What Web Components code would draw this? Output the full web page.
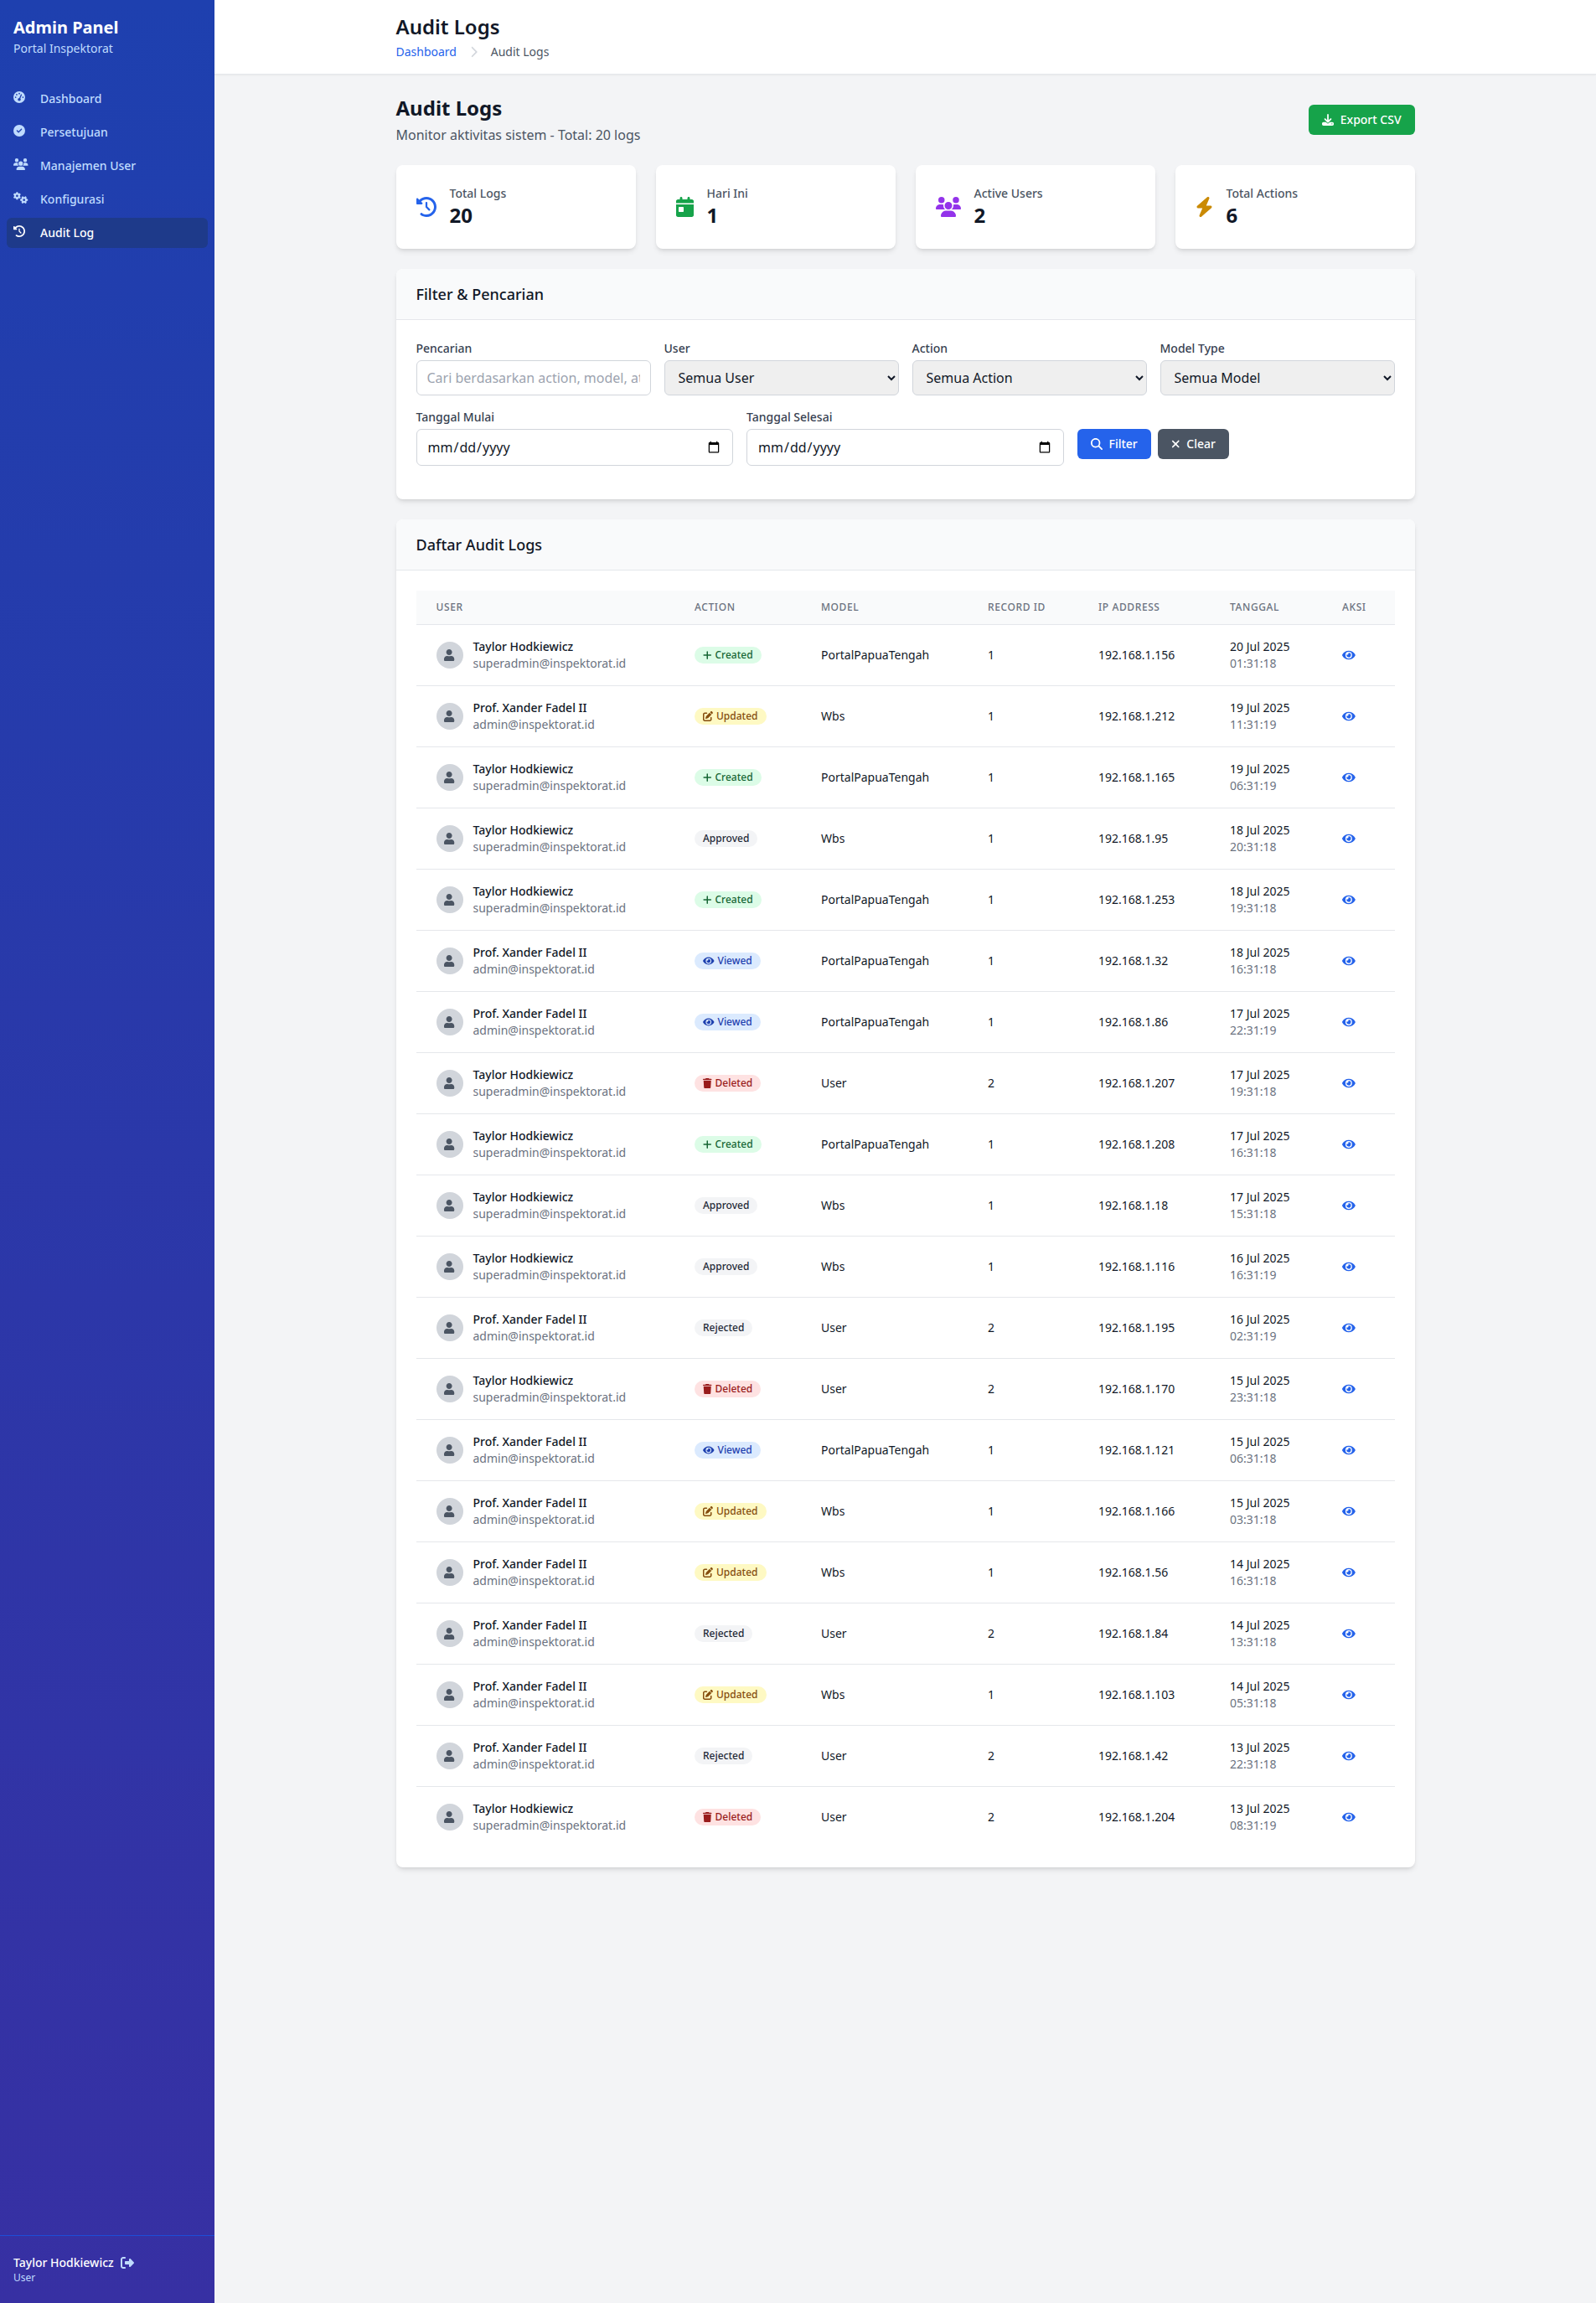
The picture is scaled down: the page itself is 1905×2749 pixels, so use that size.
<!DOCTYPE html>
<html lang="id">
<head>
<meta charset="utf-8">
<title>Audit Logs</title>
<style>
  html, body { margin: 0; padding: 0; }
  body { font-family: "Noto Sans", sans-serif; background: #f3f4f6; color: #111827; }
</style>
</head>
<body>
<admin-app>
  <admin-sidebar slot="sidebar">
    <nav-link icon="gauge" label="Dashboard"></nav-link>
    <nav-link icon="check" label="Persetujuan"></nav-link>
    <nav-link icon="users" label="Manajemen User"></nav-link>
    <nav-link icon="gears" label="Konfigurasi"></nav-link>
    <nav-link icon="history" label="Audit Log" active></nav-link>
  </admin-sidebar>
  <top-header title-text="Audit Logs"></top-header>
  <page-content>
    <page-title></page-title>
    <stat-row>
      <stat-card icon="history" color="#2563eb" label="Total Logs" value="20"></stat-card>
      <stat-card icon="calendar" color="#16a34a" label="Hari Ini" value="1"></stat-card>
      <stat-card icon="users" color="#9333ea" label="Active Users" value="2"></stat-card>
      <stat-card icon="bolt" color="#ca8a04" label="Total Actions" value="6"></stat-card>
    </stat-row>
    <panel-card heading="Filter &amp; Pencarian"><filter-form></filter-form></panel-card>
    <panel-card heading="Daftar Audit Logs"><audit-table></audit-table></panel-card>
  </page-content>
</admin-app>

<script>
const FONT = '"Noto Sans", sans-serif';
const ICONS = {
  gauge: [512, "M0 256a256 256 0 1 1 512 0A256 256 0 1 1 0 256zM288 96a32 32 0 1 0 -64 0 32 32 0 1 0 64 0zM256 416c35.3 0 64-28.7 64-64c0-17.4-6.9-33.1-18.1-44.6L366 161.7c5.3-12.1-.2-26.3-12.3-31.6s-26.3 .2-31.6 12.3L257.9 288c-.6 0-1.3 0-1.9 0c-35.3 0-64 28.7-64 64s28.7 64 64 64zM176 144a32 32 0 1 0 -64 0 32 32 0 1 0 64 0zM96 288a32 32 0 1 0 0-64 32 32 0 1 0 0 64zm352-32a32 32 0 1 0 -64 0 32 32 0 1 0 64 0z"],
  check: [512, "M256 512A256 256 0 1 0 256 0a256 256 0 1 0 0 512zM369 209L241 337c-9.4 9.4-24.6 9.4-33.9 0l-64-64c-9.4-9.4-9.4-24.6 0-33.9s24.6-9.4 33.9 0l47 47L335 175c9.4-9.4 24.6-9.4 33.9 0s9.4 24.6 0 33.9z"],
  users: [640, "M144 0a80 80 0 1 1 0 160A80 80 0 1 1 144 0zM512 0a80 80 0 1 1 0 160A80 80 0 1 1 512 0zM0 298.7C0 239.8 47.8 192 106.7 192h42.7c15.9 0 31 3.5 44.6 9.7c-1.3 7.2-1.9 14.7-1.9 22.3c0 38.2 16.8 72.5 43.3 96c-.2 0-.4 0-.7 0H21.3C9.6 320 0 310.4 0 298.7zM405.3 320c-.2 0-.4 0-.7 0c26.6-23.5 43.3-57.8 43.3-96c0-7.6-.7-15-1.9-22.3c13.6-6.3 28.7-9.7 44.6-9.7h42.7C592.2 192 640 239.8 640 298.7c0 11.8-9.6 21.3-21.3 21.3H405.3zM224 224a96 96 0 1 1 192 0 96 96 0 1 1 -192 0zM128 485.3C128 411.7 187.7 352 261.3 352H378.7C452.3 352 512 411.7 512 485.3c0 14.7-11.9 26.7-26.7 26.7H154.7c-14.7 0-26.7-11.9-26.7-26.7z"],
  gears: [640, "M308.5 135.3c7.1-6.3 9.9-16.2 6.2-25c-2.3-5.3-4.8-10.5-7.6-15.5L304 89.4c-3-5-6.3-9.9-9.8-14.6c-5.7-7.6-15.7-10.1-24.7-7.1l-28.2 9.3c-10.7-8.8-23-16-36.2-20.9L199 27.1c-1.9-9.3-9.1-16.7-18.5-17.8C173.9 8.4 167.2 8 160.4 8h-.7c-6.8 0-13.5 .4-20.1 1.2c-9.4 1.1-16.6 8.6-18.5 17.8L115 56.1c-13.3 5-25.5 12.1-36.2 20.9L50.5 67.8c-9-3-19-.5-24.7 7.1c-3.5 4.7-6.8 9.6-9.9 14.6l-3 5.3c-2.8 5-5.3 10.2-7.6 15.6c-3.7 8.7-.9 18.6 6.2 25l22.2 19.8C32.6 161.9 32 168.9 32 176s.6 14.1 1.7 20.9L11.5 216.7c-7.1 6.3-9.9 16.2-6.2 25c2.3 5.3 4.8 10.5 7.6 15.6l3 5.2c3 5.1 6.3 9.9 9.9 14.6c5.7 7.6 15.7 10.1 24.7 7.1l28.2-9.3c10.7 8.8 23 16 36.2 20.9l6.1 29.1c1.9 9.3 9.1 16.7 18.5 17.8c6.7 .8 13.5 1.2 20.4 1.2s13.7-.4 20.4-1.2c9.4-1.1 16.6-8.6 18.5-17.8l6.1-29.1c13.3-5 25.5-12.1 36.2-20.9l28.2 9.3c9 3 19 .5 24.7-7.1c3.5-4.7 6.8-9.5 9.8-14.6l3.1-5.4c2.8-5 5.3-10.2 7.6-15.5c3.7-8.7 .9-18.6-6.2-25l-22.2-19.8c1.1-6.8 1.7-13.8 1.7-20.9s-.6-14.1-1.7-20.9l22.2-19.8zM112 176a48 48 0 1 1 96 0 48 48 0 1 1 -96 0zM504.7 500.5c6.3 7.1 16.2 9.9 25 6.2c5.3-2.3 10.5-4.8 15.5-7.6l5.4-3.1c5-3 9.9-6.3 14.6-9.8c7.6-5.7 10.1-15.7 7.1-24.7l-9.3-28.2c8.8-10.7 16-23 20.9-36.2l29.1-6.1c9.3-1.9 16.7-9.1 17.8-18.5c.8-6.7 1.2-13.5 1.2-20.4s-.4-13.7-1.2-20.4c-1.1-9.4-8.6-16.6-17.8-18.5L583.9 307c-5-13.3-12.1-25.5-20.9-36.2l9.3-28.2c3-9 .5-19-7.1-24.7c-4.7-3.5-9.6-6.8-14.6-9.9l-5.3-3c-5-2.8-10.2-5.3-15.6-7.6c-8.7-3.7-18.6-.9-25 6.2l-19.8 22.2c-6.8-1.1-13.8-1.7-20.9-1.7s-14.1 .6-20.9 1.7l-19.8-22.2c-6.3-7.1-16.2-9.9-25-6.2c-5.3 2.3-10.5 4.8-15.6 7.6l-5.2 3c-5.1 3-9.9 6.3-14.6 9.9c-7.6 5.7-10.1 15.7-7.1 24.7l9.3 28.2c-8.8 10.7-16 23-20.9 36.2L315.1 313c-9.3 1.9-16.7 9.1-17.8 18.5c-.8 6.7-1.2 13.5-1.2 20.4s.4 13.7 1.2 20.4c1.1 9.4 8.6 16.6 17.8 18.5l29.1 6.1c5 13.3 12.1 25.5 20.9 36.2l-9.3 28.2c-3 9-.5 19 7.1 24.7c4.7 3.5 9.5 6.8 14.6 9.8l5.4 3.1c5 2.8 10.2 5.3 15.5 7.6c8.7 3.7 18.6 .9 25-6.2l19.8-22.2c6.8 1.1 13.8 1.7 21 1.7s14.1-.6 21-1.7l19.8 22.2zM464 304a48 48 0 1 1 0 96 48 48 0 1 1 0-96z"],
  history: [512, "M75 75L41 41C25.9 25.9 0 36.6 0 57.9V168c0 13.3 10.7 24 24 24H134.1c21.4 0 32.1-25.9 17-41l-30.8-30.8C155 85.5 203 64 256 64c106 0 192 86 192 192s-86 192-192 192c-40.8 0-78.6-12.7-109.7-34.4c-14.5-10.1-34.4-6.6-44.6 7.9s-6.6 34.4 7.9 44.6C151.2 495 201.7 512 256 512c141.4 0 256-114.6 256-256S397.4 0 256 0C185.3 0 121.3 28.7 75 75zm181 53c-13.3 0-24 10.7-24 24V256c0 6.4 2.5 12.5 7 17l72 72c9.4 9.4 24.6 9.4 33.9 0s9.4-24.6 0-33.9l-65-65V152c0-13.3-10.7-24-24-24z"],
  calendar: [448, "M128 0c17.7 0 32 14.3 32 32V64H288V32c0-17.7 14.3-32 32-32s32 14.3 32 32V64h48c26.5 0 48 21.5 48 48v48H0V112C0 85.5 21.5 64 48 64H96V32c0-17.7 14.3-32 32-32zM0 192H448V464c0 26.5-21.5 48-48 48H48c-26.5 0-48-21.5-48-48V192zm80 64c-8.8 0-16 7.2-16 16v96c0 8.8 7.2 16 16 16h96c8.8 0 16-7.2 16-16V272c0-8.8-7.2-16-16-16H80z"],
  bolt: [448, "M349.4 44.6c5.9-13.7 1.5-29.7-10.6-38.5s-28.6-8-39.9 1.8l-256 224c-10 8.8-13.6 22.9-8.9 35.3S50.7 288 64 288H175.5L98.6 467.4c-5.9 13.7-1.5 29.7 10.6 38.5s28.6 8 39.9-1.8l256-224c10-8.8 13.6-22.9 8.9-35.3s-16.6-20.7-30-20.7H272.5L349.4 44.6z"],
  download: [512, "M288 32c0-17.7-14.3-32-32-32s-32 14.3-32 32V274.7l-73.4-73.4c-12.5-12.5-32.8-12.5-45.3 0s-12.5 32.8 0 45.3l128 128c12.5 12.5 32.8 12.5 45.3 0l128-128c12.5-12.5 12.5-32.8 0-45.3s-32.8-12.5-45.3 0L288 274.7V32zM64 352c-35.3 0-64 28.7-64 64v32c0 35.3 28.7 64 64 64H448c35.3 0 64-28.7 64-64V416c0-35.3-28.7-64-64-64H346.5l-45.3 45.3c-25 25-65.5 25-90.5 0L165.5 352H64zm368 56a24 24 0 1 1 0 48 24 24 0 1 1 0-48z"],
  search: [512, "M416 208c0 45.9-14.9 88.3-40 122.7L502.6 457.4c12.5 12.5 12.5 32.8 0 45.3s-32.8 12.5-45.3 0L330.7 376c-34.4 25.2-76.8 40-122.7 40C93.1 416 0 322.9 0 208S93.1 0 208 0S416 93.1 416 208zM208 352a144 144 0 1 0 0-288 144 144 0 1 0 0 288z"],
  xmark: [384, "M342.6 150.6c12.5-12.5 12.5-32.8 0-45.3s-32.8-12.5-45.3 0L192 210.7 86.6 105.4c-12.5-12.5-32.8-12.5-45.3 0s-12.5 32.8 0 45.3L146.7 256 41.4 361.4c-12.5 12.5-12.5 32.8 0 45.3s32.8 12.5 45.3 0L192 301.3 297.4 406.6c12.5 12.5 32.8 12.5 45.3 0s12.5-32.8 0-45.3L237.3 256 342.6 150.6z"],
  eye: [576, "M572.52 241.4C518.29 135.59 410.93 64 288 64S57.68 135.64 3.48 241.41a32.35 32.35 0 0 0 0 29.19C57.71 376.41 165.07 448 288 448s230.32-71.64 284.52-177.41a32.35 32.35 0 0 0 0-29.19zM288 400a144 144 0 1 1 144-144 143.93 143.93 0 0 1-144 144zm0-240a95.31 95.31 0 0 0-25.31 3.79 47.85 47.85 0 0 1-66.9 66.9A95.78 95.78 0 1 0 288 160z"],
  user: [448, "M224 256c70.7 0 128-57.3 128-128S294.7 0 224 0 96 57.3 96 128s57.3 128 128 128zm89.6 32h-16.7c-22.2 10.2-46.9 16-72.9 16s-50.6-5.8-72.9-16h-16.7C60.2 288 0 348.2 0 422.4V464c0 26.5 21.5 48 48 48h352c26.5 0 48-21.5 48-48v-41.6c0-74.2-60.2-134.4-134.4-134.4z"],
  plus: [448, "M256 80c0-17.7-14.3-32-32-32s-32 14.3-32 32V224H48c-17.7 0-32 14.3-32 32s14.3 32 32 32H192V432c0 17.7 14.3 32 32 32s32-14.3 32-32V288H400c17.7 0 32-14.3 32-32s-14.3-32-32-32H256V80z"],
  edit: [512, "M471.6 21.7c-21.9-21.9-57.3-21.9-79.2 0L362.3 51.7l97.9 97.9 30.1-30.1c21.9-21.9 21.9-57.3 0-79.2L471.6 21.7zm-299.2 220c-6.1 6.1-10.8 13.6-13.5 21.9l-29.6 88.8c-2.9 8.6-.6 18.1 5.8 24.6s15.9 8.7 24.6 5.8l88.8-29.6c8.2-2.7 15.7-7.4 21.9-13.5L437.7 172.3 339.7 74.3 172.4 241.7zM96 64C43 64 0 107 0 160V416c0 53 43 96 96 96H352c53 0 96-43 96-96V320c0-17.7-14.3-32-32-32s-32 14.3-32 32v96c0 17.7-14.3 32-32 32H96c-17.7 0-32-14.3-32-32V160c0-17.7 14.3-32 32-32h96c17.7 0 32-14.3 32-32s-14.3-32-32-32H96z"],
  trash: [448, "M135.2 17.7L128 32H32C14.3 32 0 46.3 0 64S14.3 96 32 96H416c17.7 0 32-14.3 32-32s-14.3-32-32-32H320l-7.2-14.3C307.4 6.8 296.3 0 284.2 0H163.8c-12.1 0-23.2 6.8-28.6 17.7zM416 128H32L53.2 467c1.6 25.3 22.6 45 47.9 45H346.9c25.3 0 46.3-19.7 47.9-45L416 128z"],
  signout: [512, "M377.9 105.9L500.7 228.7c7.2 7.2 11.3 17.1 11.3 27.3s-4.1 20.1-11.3 27.3L377.9 406.1c-6.4 6.4-15 9.9-24 9.9c-18.7 0-33.9-15.2-33.9-33.9l0-62.1-128 0c-17.7 0-32-14.3-32-32l0-64c0-17.7 14.3-32 32-32l128 0 0-62.1c0-18.7 15.2-33.9 33.9-33.9c9 0 17.6 3.6 24 9.9zM160 96L96 96c-17.7 0-32 14.3-32 32l0 256c0 17.7 14.3 32 32 32l64 0c17.7 0 32 14.3 32 32s-14.3 32-32 32l-64 0c-53 0-96-43-96-96L0 128C0 75 43 32 96 32l64 0c17.7 0 32 14.3 32 32s-14.3 32-32 32z"],
  chevron: [320, "M310.6 233.4c12.5 12.5 12.5 32.8 0 45.3l-192 192c-12.5 12.5-32.8 12.5-45.3 0s-12.5-32.8 0-45.3L242.7 256 73.4 86.6c-12.5-12.5-12.5-32.8 0-45.3s32.8-12.5 45.3 0l192 192z"]
};

class FaIcon extends HTMLElement {
  constructor() {
    super();
    const shadow = this.attachShadow({ mode: "open" });
    const size = Number(this.getAttribute("size")) || 14;
    const [w, d] = ICONS[this.getAttribute("name")];
    const width = (size * w) / 512;
    shadow.innerHTML = `
      <style>
        :host { display: inline-block; flex: none; width: ${width}px; height: ${size}px; line-height: 0; }
        svg { display: block; width: 100%; height: 100%; fill: currentColor; }
      </style>
      <svg viewBox="0 0 ${w} 512" aria-hidden="true"><path d="${d}"></path></svg>`;
  }
}
customElements.define("fa-icon", FaIcon);

class AdminApp extends HTMLElement {
  constructor() {
    super();
    this.attachShadow({ mode: "open" }).innerHTML = `
      <style>
        :host { display: flex; min-height: 100vh; }
        .main { flex: 1; min-width: 0; }
      </style>
      <slot name="sidebar"></slot>
      <div class="main"><slot></slot></div>`;
  }
}
customElements.define("admin-app", AdminApp);

class AdminSidebar extends HTMLElement {
  constructor() {
    super();
    this.attachShadow({ mode: "open" }).innerHTML = `
      <style>
        :host { display: flex; flex-direction: column; flex: none; width: 256px; background: linear-gradient(to bottom, #1e40af, #3730a3); color: #fff; }
        .brand { padding: 19px 16px 32px; height: 49px; }
        .brand h2 { margin: 0; font-size: 20px; line-height: 28px; font-weight: 700; }
        .brand p { margin: 1px 0 0; font-size: 14px; line-height: 20px; color: #bfdbfe; }
        nav { flex: 1; padding: 0 8px; display: flex; flex-direction: column; gap: 4px; }
        .foot { border-top: 1px solid #1d4ed8; padding: 22px 16px; }
        .who { display: flex; align-items: center; gap: 8px; font-size: 14px; line-height: 20px; font-weight: 500; }
        .who fa-icon { color: #bfdbfe; }
        .role { font-size: 12px; line-height: 16px; color: #bfdbfe; }
      </style>
      <div class="brand">
        <h2>Admin Panel</h2>
        <p>Portal Inspektorat</p>
      </div>
      <nav><slot></slot></nav>
      <div class="foot">
        <div class="who"><span>Taylor Hodkiewicz</span><fa-icon name="signout" size="16"></fa-icon></div>
        <div class="role">User</div>
      </div>`;
  }
}
customElements.define("admin-sidebar", AdminSidebar);

class NavLink extends HTMLElement {
  constructor() {
    super();
    const icon = this.getAttribute("icon");
    const label = this.getAttribute("label");
    this.attachShadow({ mode: "open" }).innerHTML = `
      <style>
        :host { display: flex; align-items: flex-start; height: 36px; box-sizing: border-box; padding: 8px; border-radius: 6px; font-size: 14px; line-height: 20px; font-weight: 500; color: #bfdbfe; }
        :host([active]) { background: #1e3a8a; color: #fff; }
        .ico { width: 32px; flex: none; }
      </style>
      <span class="ico"><fa-icon name="${icon}" size="14"></fa-icon></span>
      <span>${label}</span>`;
  }
}
customElements.define("nav-link", NavLink);

class TopHeader extends HTMLElement {
  constructor() {
    super();
    const title = this.getAttribute("title-text");
    this.attachShadow({ mode: "open" }).innerHTML = `
      <style>
        :host { display: block; background: #fff; border-bottom: 1px solid #e5e7eb; box-shadow: 0 1px 2px 0 rgb(0 0 0 / .05); }
        .wrap { max-width: 1216px; margin: 0 auto; padding: 16px 0; }
        h1 { margin: 0; font-size: 24px; line-height: 32px; font-weight: 600; color: #111827; }
        .crumbs { display: flex; align-items: center; margin-top: 4px; font-size: 14px; line-height: 20px; }
        a { color: #2563eb; text-decoration: none; }
        span { color: #4b5563; }
        fa-icon { margin: 0 16px; color: #d1d5db; }
      </style>
      <div class="wrap">
        <h1>${title}</h1>
        <div class="crumbs">
          <a href="#">Dashboard</a>
          <fa-icon name="chevron" size="14"></fa-icon>
          <span>${title}</span>
        </div>
      </div>`;
  }
}
customElements.define("top-header", TopHeader);

class PageContent extends HTMLElement {
  constructor() {
    super();
    this.attachShadow({ mode: "open" }).innerHTML = `
      <style>
        :host { display: flex; flex-direction: column; gap: 24px; max-width: 1216px; margin: 0 auto; padding: 24px 0; }
      </style>
      <slot></slot>`;
  }
}
customElements.define("page-content", PageContent);

class PageTitle extends HTMLElement {
  constructor() {
    super();
    this.attachShadow({ mode: "open" }).innerHTML = `
      <style>
        :host { display: flex; align-items: center; justify-content: space-between; }
        h2 { margin: 0; font-size: 24px; line-height: 32px; font-weight: 700; color: #111827; }
        p { margin: 4px 0 0; font-size: 16px; line-height: 24px; color: #4b5563; }
        button { display: inline-flex; align-items: center; gap: 8px; height: 36px; padding: 0 16px; border: 0; border-radius: 6px; background: #16a34a; color: #fff; font: 500 14px/20px ${FONT}; }
      </style>
      <div>
        <h2>Audit Logs</h2>
        <p>Monitor aktivitas sistem - Total: 20 logs</p>
      </div>
      <button type="button"><fa-icon name="download" size="14"></fa-icon>Export CSV</button>`;
  }
}
customElements.define("page-title", PageTitle);

class StatRow extends HTMLElement {
  constructor() {
    super();
    this.attachShadow({ mode: "open" }).innerHTML = `
      <style>
        :host { display: grid; grid-template-columns: repeat(4, 1fr); gap: 24px; }
      </style>
      <slot></slot>`;
  }
}
customElements.define("stat-row", StatRow);

class StatCard extends HTMLElement {
  constructor() {
    super();
    const color = this.getAttribute("color");
    this.attachShadow({ mode: "open" }).innerHTML = `
      <style>
        :host { display: flex; align-items: center; gap: 16px; padding: 24px; background: #fff; border-radius: 8px; box-shadow: 0 4px 6px -1px rgb(0 0 0 / .1), 0 2px 4px -2px rgb(0 0 0 / .1); }
        fa-icon { color: ${color}; }
        .label { font-size: 14px; line-height: 20px; font-weight: 500; color: #4b5563; }
        .value { font-size: 24px; line-height: 32px; font-weight: 700; color: #111827; }
      </style>
      <fa-icon name="${this.getAttribute("icon")}" size="24"></fa-icon>
      <div>
        <div class="label">${this.getAttribute("label")}</div>
        <div class="value">${this.getAttribute("value")}</div>
      </div>`;
  }
}
customElements.define("stat-card", StatCard);

class PanelCard extends HTMLElement {
  constructor() {
    super();
    this.attachShadow({ mode: "open" }).innerHTML = `
      <style>
        :host { display: block; background: #fff; border-radius: 8px; overflow: hidden; box-shadow: 0 4px 6px -1px rgb(0 0 0 / .1), 0 2px 4px -2px rgb(0 0 0 / .1); }
        header { padding: 16px 24px; background: #f9fafb; border-bottom: 1px solid #e5e7eb; font-size: 18px; line-height: 28px; font-weight: 500; color: #111827; }
        .body { padding: 24px; }
      </style>
      <header>${this.getAttribute("heading").replace("&", "&amp;")}</header>
      <div class="body"><slot></slot></div>`;
  }
}
customElements.define("panel-card", PanelCard);

class FilterForm extends HTMLElement {
  constructor() {
    super();
    const select = (label, option) => `
      <label>${label}
        <select><option>${option}</option></select>
      </label>`;
    const date = (label) => `
      <label class="date">${label}
        <input type="date">
      </label>`;
    this.attachShadow({ mode: "open" }).innerHTML = `
      <style>
        :host { display: flex; flex-direction: column; gap: 16px; padding-bottom: 16px; }
        .top { display: grid; grid-template-columns: repeat(4, 1fr); gap: 16px; }
        .bottom { display: flex; align-items: flex-start; gap: 16px; }
        label { display: flex; flex-direction: column; gap: 4px; font-size: 14px; line-height: 20px; font-weight: 500; color: #374151; }
        .date { flex: none; width: 378.5px; }
        input, select { box-sizing: border-box; width: 100%; min-width: 0; border: 1px solid #d1d5db; border-radius: 6px; padding: 8px 12px; font: 400 16px/24px ${FONT}; color: #111827; }
        input::placeholder { color: #9ca3af; }
        .actions { display: flex; gap: 8px; padding-top: 24px; }
        button { display: inline-flex; align-items: center; gap: 8px; height: 36px; padding: 0 16px; border: 0; border-radius: 6px; color: #fff; font: 500 14px/20px ${FONT}; }
        .filter { background: #2563eb; }
        .clear { background: #4b5563; }
      </style>
      <div class="top">
        <label>Pencarian
          <input type="text" placeholder="Cari berdasarkan action, model, atau IP">
        </label>
        ${select("User", "Semua User")}
        ${select("Action", "Semua Action")}
        ${select("Model Type", "Semua Model")}
      </div>
      <div class="bottom">
        ${date("Tanggal Mulai")}
        ${date("Tanggal Selesai")}
        <div class="actions">
          <button type="button" class="filter"><fa-icon name="search" size="14"></fa-icon>Filter</button>
          <button type="button" class="clear"><fa-icon name="xmark" size="14"></fa-icon>Clear</button>
        </div>
      </div>`;
  }
}
customElements.define("filter-form", FilterForm);

const BADGES = {
  Created: ["plus", "#dcfce7", "#166534"],
  Updated: ["edit", "#fef9c3", "#854d0e"],
  Viewed: ["eye", "#dbeafe", "#1e40af"],
  Deleted: ["trash", "#fee2e2", "#991b1b"],
  Approved: [null, "#f3f4f6", "#1f2937"],
  Rejected: [null, "#f3f4f6", "#1f2937"]
};

class ActionBadge extends HTMLElement {
  constructor() {
    super();
    const action = this.getAttribute("action");
    const [icon, bg, fg] = BADGES[action];
    this.attachShadow({ mode: "open" }).innerHTML = `
      <style>
        :host { display: inline-flex; align-items: center; gap: 4px; height: 20px; padding: 0 10px; border-radius: 999px; background: ${bg}; color: ${fg}; font-size: 12px; line-height: 16px; font-weight: 500; }
      </style>
      ${icon ? `<fa-icon name="${icon}" size="12"></fa-icon>` : ""}${action}`;
  }
}
customElements.define("action-badge", ActionBadge);

class UserCell extends HTMLElement {
  constructor() {
    super();
    this.attachShadow({ mode: "open" }).innerHTML = `
      <style>
        :host { display: flex; align-items: center; gap: 12px; }
        .avatar { display: flex; align-items: center; justify-content: center; width: 32px; height: 32px; border-radius: 50%; background: #d1d5db; color: #4b5563; }
        .name { font-size: 14px; line-height: 20px; font-weight: 500; color: #111827; }
        .mail { font-size: 14px; line-height: 20px; color: #6b7280; }
      </style>
      <div class="avatar"><fa-icon name="user" size="14"></fa-icon></div>
      <div>
        <div class="name">${this.getAttribute("name")}</div>
        <div class="mail">${this.getAttribute("email")}</div>
      </div>`;
  }
}
customElements.define("user-cell", UserCell);

const TAYLOR = ["Taylor Hodkiewicz", "superadmin@inspektorat.id"];
const XANDER = ["Prof. Xander Fadel II", "admin@inspektorat.id"];
const P = "PortalPapuaTengah";
const LOGS = [
  [TAYLOR, "Created", P, 1, "156", "20 Jul 2025", "01:31:18"],
  [XANDER, "Updated", "Wbs", 1, "212", "19 Jul 2025", "11:31:19"],
  [TAYLOR, "Created", P, 1, "165", "19 Jul 2025", "06:31:19"],
  [TAYLOR, "Approved", "Wbs", 1, "95", "18 Jul 2025", "20:31:18"],
  [TAYLOR, "Created", P, 1, "253", "18 Jul 2025", "19:31:18"],
  [XANDER, "Viewed", P, 1, "32", "18 Jul 2025", "16:31:18"],
  [XANDER, "Viewed", P, 1, "86", "17 Jul 2025", "22:31:19"],
  [TAYLOR, "Deleted", "User", 2, "207", "17 Jul 2025", "19:31:18"],
  [TAYLOR, "Created", P, 1, "208", "17 Jul 2025", "16:31:18"],
  [TAYLOR, "Approved", "Wbs", 1, "18", "17 Jul 2025", "15:31:18"],
  [TAYLOR, "Approved", "Wbs", 1, "116", "16 Jul 2025", "16:31:19"],
  [XANDER, "Rejected", "User", 2, "195", "16 Jul 2025", "02:31:19"],
  [TAYLOR, "Deleted", "User", 2, "170", "15 Jul 2025", "23:31:18"],
  [XANDER, "Viewed", P, 1, "121", "15 Jul 2025", "06:31:18"],
  [XANDER, "Updated", "Wbs", 1, "166", "15 Jul 2025", "03:31:18"],
  [XANDER, "Updated", "Wbs", 1, "56", "14 Jul 2025", "16:31:18"],
  [XANDER, "Rejected", "User", 2, "84", "14 Jul 2025", "13:31:18"],
  [XANDER, "Updated", "Wbs", 1, "103", "14 Jul 2025", "05:31:18"],
  [XANDER, "Rejected", "User", 2, "42", "13 Jul 2025", "22:31:18"],
  [TAYLOR, "Deleted", "User", 2, "204", "13 Jul 2025", "08:31:19"]
];

class AuditTable extends HTMLElement {
  constructor() {
    super();
    const cols = [308.5, 151, 199, 132, 157, 134, 86.5];
    const heads = ["User", "Action", "Model", "Record ID", "IP Address", "Tanggal", "Aksi"];
    const rows = LOGS.map(([u, action, model, id, ip, day, time]) => `
      <tr>
        <td><user-cell name="${u[0]}" email="${u[1]}"></user-cell></td>
        <td><div class="mid"><action-badge action="${action}"></action-badge></div></td>
        <td>${model}</td>
        <td>${id}</td>
        <td>192.168.1.${ip}</td>
        <td><div>${day}</div><div class="time">${time}</div></td>
        <td><div class="mid eye"><fa-icon name="eye" size="14"></fa-icon></div></td>
      </tr>`).join("");
    this.attachShadow({ mode: "open" }).innerHTML = `
      <style>
        :host { display: block; }
        table { width: 100%; table-layout: fixed; border-collapse: separate; border-spacing: 0; }
        th { padding: 12px 24px; background: #f9fafb; border-bottom: 1px solid #e5e7eb; text-align: left; font-size: 12px; line-height: 16px; font-weight: 500; letter-spacing: .05em; text-transform: uppercase; color: #6b7280; white-space: nowrap; }
        td { padding: 16px 24px; border-bottom: 1px solid #e5e7eb; font-size: 14px; line-height: 20px; color: #111827; vertical-align: middle; white-space: nowrap; }
        tr:last-child td { border-bottom: 0; }
        .time { color: #6b7280; }
        .eye { color: #2563eb; }
        .mid { display: flex; align-items: center; }
      </style>
      <table>
        <colgroup>${cols.map((w) => `<col style="width:${w}px">`).join("")}</colgroup>
        <thead><tr>${heads.map((h) => `<th>${h}</th>`).join("")}</tr></thead>
        <tbody>${rows}</tbody>
      </table>`;
  }
}
customElements.define("audit-table", AuditTable);
</script>
</body>
</html>
